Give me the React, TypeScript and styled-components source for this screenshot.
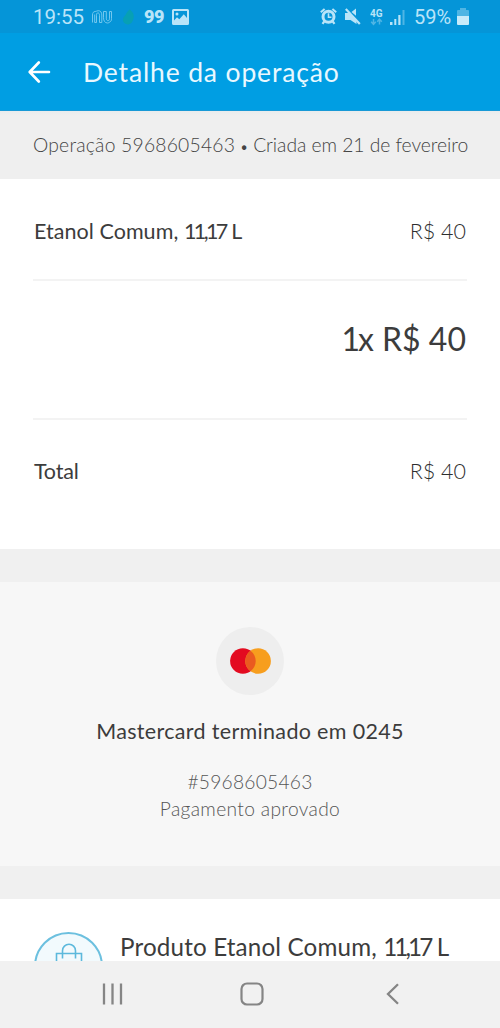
import React from 'react';
import styled, { createGlobalStyle } from 'styled-components';

const GlobalStyle = createGlobalStyle`
  *, *::before, *::after { box-sizing: border-box; }
  body { margin: 0; background: #f0f0f0; font-family: Lato, "Open Sans", sans-serif; }
`;

const Screen = styled.div`
  width: 500px;
  height: 1028px;
  display: flex;
  flex-direction: column;
  overflow: hidden;
  background: #f0f0f0;
`;

const Text = styled.span<{ $size: number; $line?: number; $weight?: number; $color?: string; $track?: number }>`
  font-size: ${(p) => p.$size}px;
  line-height: ${(p) => p.$line ?? 28}px;
  font-weight: ${(p) => p.$weight ?? 400};
  color: ${(p) => p.$color ?? '#3c3c3c'};
  letter-spacing: ${(p) => p.$track ?? 0}px;
  white-space: nowrap;
`;

const Digits = styled.span<{ $track: number }>`
  letter-spacing: ${(p) => p.$track}px;
`;

const Bullet = styled.span`
  font-size: 15px;
  line-height: 1;
  margin: 0 -0.5px;
`;

const StatusBar = styled.div`
  flex: none;
  height: 33px;
  padding: 0 31px 0 33px;
  display: flex;
  justify-content: space-between;
  align-items: center;
  background: #0595d8;
  color: #b9e4f8;
  font-family: Roboto, sans-serif;
  svg { display: block; flex: none; }
`;

const StatusGroup = styled.div`
  display: flex;
  align-items: center;
`;

const StatusText = styled.span<{ $width: number; $size: number }>`
  width: ${(p) => p.$width}px;
  font-size: ${(p) => p.$size}px;
  line-height: 33px;
  padding-top: 1px;
  white-space: nowrap;
`;

const NineNine = styled.span`
  width: 28px;
  font: 900 18px/33px Roboto, sans-serif;
  letter-spacing: -0.4px;
`;

const Header = styled.header`
  flex: none;
  height: 78px;
  padding: 0 28px;
  display: flex;
  align-items: center;
  gap: 32px;
  background: #009ee3;
  border-bottom: 1px solid #1799d6;
  svg { display: block; flex: none; }
`;

const Summary = styled.div`
  flex: none;
  height: 68px;
  padding: 0 33px;
  display: flex;
  align-items: center;
  background: linear-gradient(#e9eced, #efefef 5px);
`;

const Receipt = styled.section`
  flex: none;
  height: 370px;
  padding: 0 33px;
  background: #fff;
`;

const Row = styled.div<{ $height: number; $top: number; $end?: boolean; $line?: boolean }>`
  height: ${(p) => p.$height}px;
  padding: ${(p) => p.$top}px 1px 0;
  display: flex;
  align-items: flex-start;
  justify-content: ${(p) => (p.$end ? 'flex-end' : 'space-between')};
  border-bottom: ${(p) => (p.$line ? '2px solid #f3f3f3' : 'none')};
`;

const Payment = styled.section`
  flex: none;
  height: 284px;
  margin: 33px 0;
  padding-top: 45px;
  display: flex;
  flex-direction: column;
  align-items: center;
  background: #f7f7f7;
`;

const Brand = styled.div`
  width: 68px;
  height: 68px;
  margin-bottom: 22px;
  border-radius: 50%;
  background: #eee;
  display: flex;
  align-items: center;
  justify-content: center;
`;

const Details = styled.div`
  margin-top: 23px;
  display: flex;
  flex-direction: column;
  align-items: center;
`;

const Product = styled.section`
  flex: none;
  height: 62px;
  padding: 33px 33px 0 34px;
  display: flex;
  align-items: flex-start;
  gap: 17px;
  overflow: hidden;
  background: #fff;
`;

const BagCircle = styled.div`
  flex: none;
  width: 69px;
  height: 69px;
  border: 2px solid #6cc0df;
  border-radius: 50%;
  background: #f2fafd;
  display: flex;
  justify-content: center;
  padding-top: 9px;
`;

const NavBar = styled.nav`
  flex: none;
  height: 67px;
  padding: 0 100px 2px;
  display: flex;
  align-items: center;
  background: #f1f1f1;
  svg { display: block; }
`;

const HomeSlot = styled.div`
  margin: 0 auto 0 116px;
`;

const StatusLeft = () => (
  <StatusGroup>
    <StatusText $width={59} $size={20.5}>19:55</StatusText>
    <svg width="20" height="14" viewBox="0 0 20 14" fill="none" stroke="#7fcdf0" strokeWidth="0.9">
      <path d="M.5 12.500V5C.5 2.800 1.500 1.500 3.200 1.500c1.300 0 1.800-.8 3-.8C8.500.7 9.800 2.300 9.800 5v7.500H7.500V5.300c0-1.600-.6-2.400-1.600-2.400S4.500 3.700 4.500 5.300v7.200H2.700V4.500" />
      <path d="M11.500 1.500v6.200c0 3 1.400 5.300 4 5.300 1.200 0 1.500-.5 2.300-1 1.200-.6 1.700-1.500 1.700-3.300V1.500h-2v6.700c0 1.700-.5 2.500-1.500 2.500s-1.700-.8-1.700-2.500V1.500z" />
    </svg>
    <svg width="32" height="18" viewBox="0 0 32 18">
      <path d="M17.500 1.500c3.200 1.800 5 5.500 4 9-.8 3.500-2.500 5.500-5 6-3.500 0-6-2.500-5.500-5.500.3-2.500 2.500-3 3-5C14.500 4.500 16 3 17.500 1.500z" fill="#07a0b4" />
    </svg>
    <NineNine>99</NineNine>
    <svg width="17" height="16" viewBox="0 0 17 16">
      <path fillRule="evenodd" fill="#b9e4f8" d="M1.500 0h14A1.500 1.500 0 0 1 17 1.500v13a1.500 1.500 0 0 1-1.500 1.500h-14A1.500 1.500 0 0 1 0 14.500v-13A1.500 1.500 0 0 1 1.500 0zM2 2v9.500l3-3.200 2.300 2 4.500-5L15 9V2z" />
      <circle cx="5" cy="5" r="1.500" fill="#b9e4f8" />
    </svg>
  </StatusGroup>
);

const StatusRight = () => (
  <StatusGroup>
    <svg width="25" height="17" viewBox="0 0 25 17" fill="none" stroke="#b9e4f8">
      <circle cx="8.500" cy="8.700" r="5.500" strokeWidth="3" />
      <path d="M8.500 5.300v4h3" strokeWidth="1.600" />
      <path d="M.8 4.300 4.600 1M16.200 4.300 12.400 1" strokeWidth="2" />
      <path d="m4.200 13.500-1.700 2.300M12.800 13.500l1.700 2.300" strokeWidth="2.200" />
    </svg>
    <svg width="25" height="17" viewBox="0 0 25 17">
      <path d="M0 5h4.500l7 6.500V16L5.500 12H0zM6.500 4 11 .5v7.300z" fill="#b9e4f8" />
      <path d="M.8 1 14.800 16" stroke="#b9e4f8" strokeWidth="2.200" />
    </svg>
    <svg width="20" height="18" viewBox="0 0 20 18">
      <text x="0" y="8.500" fontFamily="Roboto, sans-serif" fontWeight="700" fontSize="10" fill="#b9e4f8">4G</text>
      <path d="M3.500 11v5M1.200 13.800l2.300 2.500 2.300-2.500M9.500 16.500v-5M7.200 13.700l2.300-2.500 2.300 2.500" stroke="#4fb5e4" strokeWidth="1.500" fill="none" />
    </svg>
    <svg width="24" height="17" viewBox="0 0 24 17">
      <path d="M0 14h2.500v3H0zM4.300 11h2v6h-2zM8.300 7h2.200v10H8.300z" fill="#b9e4f8" />
      <path d="M12.500 2h2v15h-2z" fill="#4fb5e4" />
    </svg>
    <StatusText $width={43} $size={20}>59%</StatusText>
    <svg width="12" height="17" viewBox="0 0 12 17">
      <path d="M3 0h6v2h2q1 0 1 1v5H0V3q0-1 1-1h2z" fill="#4fb5e4" />
      <path d="M0 8h12v8q0 1-1 1H1q-1 0-1-1z" fill="#c9ebfa" />
    </svg>
  </StatusGroup>
);

export default function App() {
  return (
    <Screen>
      <GlobalStyle />
      <StatusBar>
        <StatusLeft />
        <StatusRight />
      </StatusBar>
      <Header>
        <svg width="23" height="22" viewBox="0 0 23 22" fill="none" stroke="#fff" strokeWidth="2.600" strokeLinecap="round" strokeLinejoin="round">
          <path d="M21 11H2M10.800 1.500 1.700 11l9.100 9.500" />
        </svg>
        <Text $size={26.500} $color="#e9f8ff" $track={0.850}>Detalhe da operação</Text>
      </Header>
      <Summary>
        <Text $size={19.300} $weight={300} $color="#444" $track={-0.040}>
          <Digits $track={0.220}>Operação 5968605463</Digits> <Bullet>•</Bullet> Criada em 21 de fevereiro
        </Text>
      </Summary>
      <Receipt>
        <Row $height={102} $top={38} $line>
          <Text $size={21.500} $track={0.050}>Etanol Comum, <Digits $track={-2.600}>11,17</Digits> L</Text>
          <Text $size={21.500} $weight={300} $color="#2e2e2e">R$ 40</Text>
        </Row>
        <Row $height={139} $top={38} $end $line>
          <Text $size={32} $line={40}><Digits $track={-2}>1</Digits>x R$ 40</Text>
        </Row>
        <Row $height={129} $top={37}>
          <Text $size={21.500} $track={-0.200}>Total</Text>
          <Text $size={21.500} $weight={300} $color="#2e2e2e">R$ 40</Text>
        </Row>
      </Receipt>
      <Payment>
        <Brand>
          <svg width="41" height="26" viewBox="0 0 41 26">
            <circle cx="12.900" cy="13" r="12.800" fill="#e30b20" />
            <circle cx="28.100" cy="13" r="12.800" fill="#f79e1e" />
            <path d="M20.500 2.700a12.800 12.800 0 0 1 0 20.600 12.800 12.800 0 0 1 0-20.600z" fill="#ea5b20" />
          </svg>
        </Brand>
        <Text $size={21.500} $track={0.330}>Mastercard terminado em 0245</Text>
        <Details>
          <Text $size={19.200} $line={27} $weight={300} $color="#555" $track={0.250}>#5968605463</Text>
          <Text $size={19.200} $line={27} $weight={300} $color="#555" $track={0.350}>Pagamento aprovado</Text>
        </Details>
      </Payment>
      <Product>
        <BagCircle>
          <svg width="28" height="34" viewBox="0 0 28 34" fill="none" stroke="#5cb9dc" strokeWidth="1.600">
            <path d="M1.500 33V10.500h25V33zM7.500 15.500V7.700a6.500 6.500 0 0 1 13 0v7.800" />
          </svg>
        </BagCircle>
        <Text $size={24.200} $line={29} $track={0.160}>Produto Etanol Comum, <Digits $track={-2.900}>11,17</Digits> L</Text>
      </Product>
      <NavBar>
        <svg width="24" height="22" viewBox="0 0 24 22" stroke="#858585" strokeWidth="2.300">
          <path d="M4 .5v21M12.500.5v21M21 .5v21" />
        </svg>
        <HomeSlot>
          <svg width="24" height="24" viewBox="0 0 24 24" fill="none" stroke="#858585" strokeWidth="2.200">
            <rect x="1.500" y="1.500" width="21" height="21" rx="5.500" />
          </svg>
        </HomeSlot>
        <svg width="14" height="22" viewBox="0 0 14 22" fill="none" stroke="#858585" strokeWidth="2.300">
          <path d="M12 1.200 2 11l10 9.800" />
        </svg>
      </NavBar>
    </Screen>
  );
}
